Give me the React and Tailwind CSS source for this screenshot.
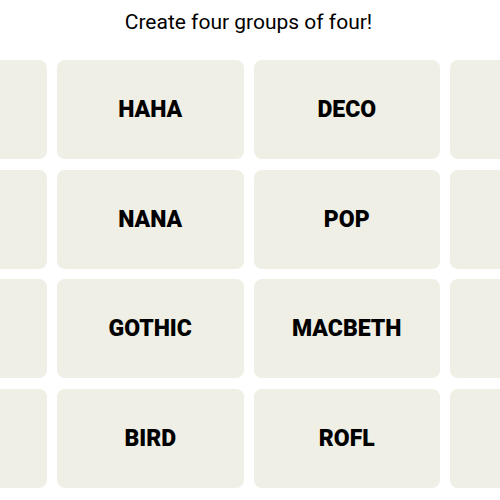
export default function App() {
  const words = [
    "", "HAHA", "DECO", "",
    "", "NANA", "POP", "",
    "", "GOTHIC", "MACBETH", "",
    "", "BIRD", "ROFL", "",
  ];
  return (
    <div className="w-[500px] h-[500px] overflow-hidden bg-white flex flex-col items-center" style={{ fontFamily: 'Roboto, "Liberation Sans", sans-serif' }}>
      <div className="h-[60px] w-full flex justify-center pt-[8px] pr-[3px]">
        <p className="text-[21px] leading-[28px] text-black">Create four groups of four!</p>
      </div>
      <div className="w-full flex justify-center">
        <div className="grid grid-cols-4 w-[776px] shrink-0 gap-x-[10px] gap-y-[10.5px] mr-[3px]">
          {words.map((w, i) => (
            <div key={i} className="h-[99px] rounded-[8px] bg-[#efefe6] flex items-center justify-center pt-[2px]">
              <span className="text-[23px] font-black text-black">{w}</span>
            </div>
          ))}
        </div>
      </div>
    </div>
  );
}
